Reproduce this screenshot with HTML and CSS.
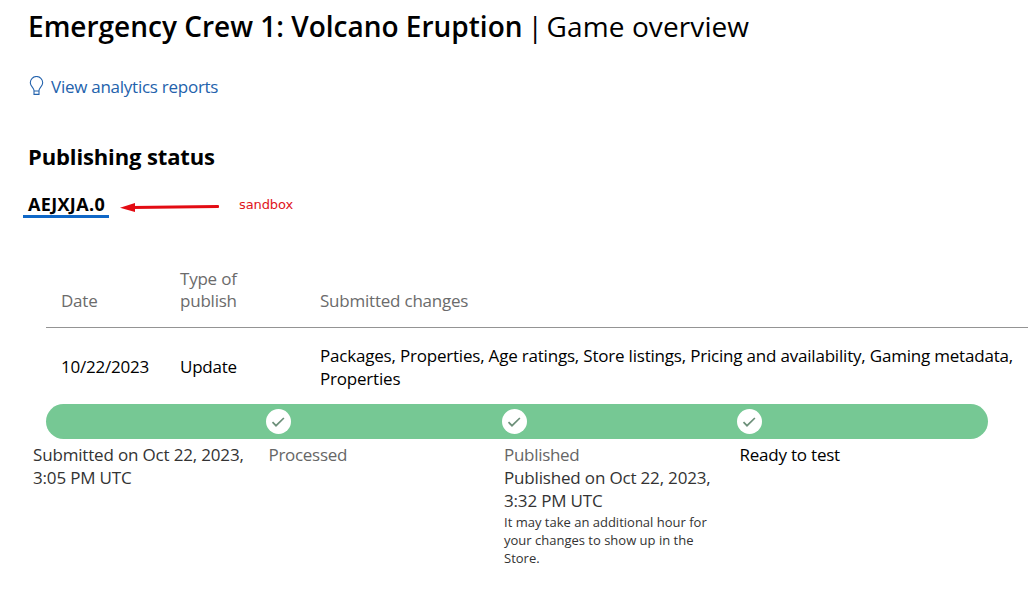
FILE: index.html
```html
<!DOCTYPE html>
<html lang="en">
<head>
  <meta charset="UTF-8" />
  <meta name="viewport" content="width=device-width, initial-scale=1" />
  <title>Game overview</title>
  <link rel="stylesheet" href="styles.css">
</head>
<body>

<div class="page">
  <h1><span class="game-name">Emergency Crew 1: Volcano Eruption</span> <span class="divider">| </span><span class="page-name">Game overview</span></h1>

  <a class="analytics-link" href="#">
    <svg class="bulb" width="15" height="20" viewBox="0 0 15 20" fill="none" stroke="currentColor" stroke-width="1.1">
      <path d="M5 14.4C5 12.2 1.3 10.2 1.3 6.7a6.2 6.2 0 0 1 12.4 0c0 3.5-3.7 5.5-3.7 7.7v4H5zM5 15h5" />
    </svg>
    <span>View analytics reports</span>
  </a>

  <h2>Publishing status</h2>

  <div class="tabs">
    <div class="tab active">AEJXJA.0</div>
    <svg class="arrow" width="99" height="12" viewBox="0 0 99 12">
      <path d="M12 6.5L98 5.5" stroke="#e30b13" stroke-width="2.8" stroke-linecap="round" />
      <path d="M0 6.7L15 2v9z" fill="#e30b13" />
    </svg>
    <span class="note">sandbox</span>
  </div>

  <table class="submissions">
    <thead>
      <tr>
        <th class="col-date">Date</th>
        <th class="col-type">Type of publish</th>
        <th>Submitted changes</th>
      </tr>
    </thead>
    <tbody>
      <tr>
        <td>10/22/2023</td>
        <td>Update</td>
        <td class="changes">Packages, Properties, Age ratings, Store listings, Pricing and availability, Gaming metadata, Properties</td>
      </tr>
    </tbody>
  </table>

  <div class="progress">
    <div class="check"><svg width="15" height="12" viewBox="0 0 15 12"><path d="M1.5 6.2L5 9.7 12.9 2" /></svg></div>
    <div class="check"><svg width="15" height="12" viewBox="0 0 15 12"><path d="M1.5 6.2L5 9.7 12.9 2" /></svg></div>
    <div class="check"><svg width="15" height="12" viewBox="0 0 15 12"><path d="M1.5 6.2L5 9.7 12.9 2" /></svg></div>
  </div>

  <div class="steps">
    <div class="step">
      <p class="when">Submitted on Oct 22, 2023, 3:05 PM UTC</p>
    </div>
    <div class="step">
      <p class="name">Processed</p>
    </div>
    <div class="step">
      <p class="name">Published</p>
      <p class="when">Published on Oct 22, 2023, 3:32 PM UTC</p>
      <p class="hint">It may take an additional hour for your changes to show up in the Store.</p>
    </div>
    <div class="step">
      <p class="current">Ready to test</p>
    </div>
  </div>
</div>

</body>
</html>
```
FILE: styles.css
```css
body {
  font-family: 'Segoe UI', 'Open Sans', 'Noto Sans', sans-serif;
  font-size: 17px;
  line-height: 23px;
  letter-spacing: -0.22px;
  color: #000;
  background: #fff;
  margin: 0;
  overflow: hidden;
}

h1, h2, p {
  margin: 0;
}

h1 {
  padding: 6px 0 0 28px;
  font-size: 28px;
  line-height: 40px;
  font-weight: 400;
  letter-spacing: -0.3px;
  white-space: nowrap;
}

.game-name {
  font-weight: 600;
  letter-spacing: 0;
}

.divider {
  margin-left: -2px;
  letter-spacing: -1.8px;
}

.page-name {
  letter-spacing: 0.1px;
}

.analytics-link {
  display: flex;
  align-items: center;
  gap: 7px;
  margin: 29px 0 0 29px;
  color: #2362ac;
  letter-spacing: -0.26px;
  text-decoration: none;
}

.bulb {
  margin-top: -2px;
}

h2 {
  margin: 43px 0 0 28px;
  font-size: 22px;
  line-height: 30px;
  font-weight: 700;
  letter-spacing: -0.13px;
}

.tabs {
  display: flex;
  align-items: center;
  height: 26px;
  margin: 21px 0 0 23px;
}

.tab {
  box-sizing: border-box;
  width: 86px;
  height: 26px;
  padding-left: 5px;
  font-size: 18px;
  line-height: 25px;
  font-weight: 700;
  letter-spacing: 0.35px;
}

.tab.active {
  border-bottom: 3px solid #0f67c7;
}

.arrow {
  margin: 4px 0 0 11px;
}

.note {
  margin: -1px 0 0 20px;
  font-family: 'DejaVu Sans', sans-serif;
  font-size: 13px;
  letter-spacing: -0.1px;
  color: #e0141b;
}

.submissions {
  width: 982px;
  margin: 50px 0 0 46px;
  table-layout: fixed;
  border-collapse: collapse;
}

th, td {
  padding: 0 0 0 15px;
  text-align: left;
  font-weight: 400;
}

th {
  height: 44px;
  padding-bottom: 15px;
  line-height: 22px;
  color: #6b6b6b;
  vertical-align: bottom;
  border-bottom: 1px solid #949494;
}

.col-date {
  width: 104px;
}

.col-type {
  width: 64px;
  padding-right: 61px;
}

td {
  height: 76px;
}

td.changes {
  height: 75px;
  padding-top: 1px;
  letter-spacing: -0.2px;
}

.progress {
  box-sizing: border-box;
  display: grid;
  grid-template-columns: repeat(3, 235.5px);
  align-items: center;
  width: 942px;
  height: 35px;
  margin-left: 46px;
  padding-left: 220px;
  background: #76c894;
  border-radius: 18px;
}

.check {
  display: flex;
  align-items: center;
  justify-content: center;
  width: 25px;
  height: 25px;
  background: #fff;
  border-radius: 50%;
}

.check path {
  fill: none;
  stroke: #6c8f79;
  stroke-width: 1.7;
}

.steps {
  display: grid;
  grid-template-columns: repeat(4, 235.5px);
  margin: 4px 0 0 33px;
}

.step {
  padding-right: 20px;
}

.name {
  color: #666;
  letter-spacing: -0.3px;
}

.when {
  color: #333;
  letter-spacing: -0.17px;
}

.hint {
  padding-top: 1px;
  font-size: 13px;
  line-height: 18px;
  letter-spacing: 0;
  color: #333;
}
```
